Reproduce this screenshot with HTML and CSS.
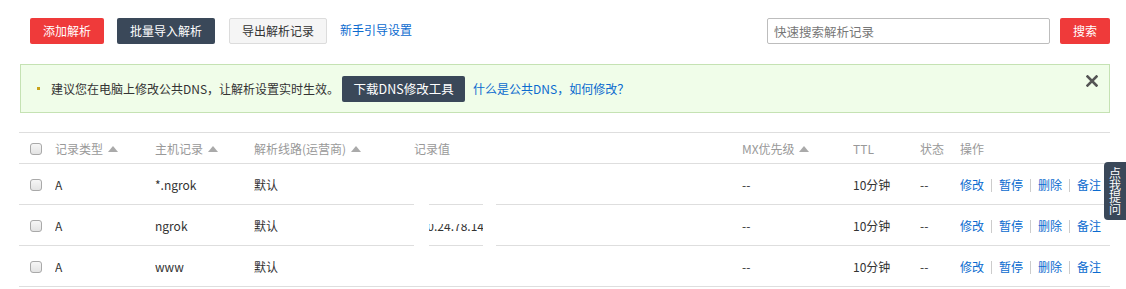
FILE: index.html
```html
<!DOCTYPE html>
<html lang="zh-CN">
<head>
    <meta charset="UTF-8">
    <title>解析记录</title>
    <link rel="stylesheet" href="styles.css">
</head>
<body>
    <div class="page">
        <div class="toolbar">
            <div class="toolbar-left">
                <button class="btn btn-red">添加解析</button>
                <button class="btn btn-dark">批量导入解析</button>
                <button class="btn btn-light">导出解析记录</button>
                <a class="link" href="#">新手引导设置</a>
            </div>
            <div class="toolbar-right">
                <input class="search-input" type="text" placeholder="快速搜索解析记录">
                <button class="btn btn-red btn-search">搜索</button>
            </div>
        </div>

        <div class="alert">
            <span class="bullet"></span>
            <span class="alert-text">建议您在电脑上修改公共DNS，让解析设置实时生效。</span>
            <button class="btn btn-dark btn-tool">下载DNS修改工具</button>
            <a class="link" href="#">什么是公共DNS，如何修改？</a>
            <span class="alert-close">
                <svg width="12" height="12" viewBox="0 0 12 12"><path d="M1.5 1.5 L10.5 10.5 M10.5 1.5 L1.5 10.5" stroke="#555" stroke-width="2.6" stroke-linecap="square"/></svg>
            </span>
        </div>

        <table class="records">
            <colgroup>
                <col style="width:36px">
                <col style="width:100px">
                <col style="width:99px">
                <col style="width:160px">
                <col style="width:328px">
                <col style="width:111px">
                <col style="width:67px">
                <col style="width:40px">
                <col>
            </colgroup>
            <thead>
                <tr>
                    <th class="check-cell"><span class="checkbox"></span></th>
                    <th>记录类型 <span class="sort"></span></th>
                    <th>主机记录 <span class="sort"></span></th>
                    <th>解析线路(运营商) <span class="sort"></span></th>
                    <th>记录值</th>
                    <th>MX优先级 <span class="sort"></span></th>
                    <th>TTL</th>
                    <th>状态</th>
                    <th>操作</th>
                </tr>
            </thead>
            <tbody>
                <tr>
                    <td class="check-cell"><span class="checkbox"></span></td>
                    <td>A</td>
                    <td>*.ngrok</td>
                    <td>默认</td>
                    <td></td>
                    <td>--</td>
                    <td>10分钟</td>
                    <td>--</td>
                    <td class="ops"><a href="#">修改</a><i></i><a href="#">暂停</a><i></i><a href="#">删除</a><i></i><a href="#">备注</a></td>
                </tr>
                <tr>
                    <td class="check-cell"><span class="checkbox"></span></td>
                    <td>A</td>
                    <td>ngrok</td>
                    <td>默认</td>
                    <td class="value-cell">120.24.78.145<span class="mask mask-a"></span><span class="mask mask-b"></span><span class="mask mask-top"></span></td>
                    <td>--</td>
                    <td>10分钟</td>
                    <td>--</td>
                    <td class="ops"><a href="#">修改</a><i></i><a href="#">暂停</a><i></i><a href="#">删除</a><i></i><a href="#">备注</a></td>
                </tr>
                <tr>
                    <td class="check-cell"><span class="checkbox"></span></td>
                    <td>A</td>
                    <td>www</td>
                    <td>默认</td>
                    <td></td>
                    <td>--</td>
                    <td>10分钟</td>
                    <td>--</td>
                    <td class="ops"><a href="#">修改</a><i></i><a href="#">暂停</a><i></i><a href="#">删除</a><i></i><a href="#">备注</a></td>
                </tr>
            </tbody>
        </table>
    </div>

    <div class="side-tab">点我提问</div>
</body>
</html>
```

FILE: styles.css
```css
:root {
    --red: #ef3a3a;
    --dark: #3a4859;
    --blue: #0b6bcf;
    --line: #dedede;
    --text: #333;
}

* {
    box-sizing: border-box;
    margin: 0;
    padding: 0;
}

body {
    font-family: "Noto Sans CJK SC", "Liberation Sans", sans-serif;
    font-size: 12px;
    color: var(--text);
    background: #fff;
    overflow: hidden;
}

.page {
    padding: 18px 16px 0 20px;
}

.toolbar {
    display: flex;
    justify-content: space-between;
    align-items: center;
    padding-left: 10px;
}

.toolbar-left,
.toolbar-right {
    display: flex;
    align-items: center;
}

.btn {
    height: 26px;
    border: none;
    border-radius: 2px;
    font-family: inherit;
    font-size: 12px;
    padding: 0;
    white-space: nowrap;
    cursor: pointer;
    line-height: 24px;
}

.btn-red {
    background: var(--red);
    color: #fff;
    width: 74px;
}

.btn-dark {
    background: var(--dark);
    color: #fff;
}

.toolbar-left .btn-dark {
    width: 98px;
    margin-left: 13px;
}

.btn-light {
    background: #f5f5f5;
    border: 1px solid #dcdcdc;
    color: #333;
    width: 98px;
    margin-left: 14px;
}

.link {
    color: var(--blue);
    text-decoration: none;
    font-size: 12px;
}

.toolbar-left .link {
    margin-left: 13px;
    margin-top: -4px;
}

.search-input {
    width: 283px;
    height: 26px;
    border: 1px solid #bdbdbd;
    border-radius: 2px;
    padding: 0 6px;
    font-family: inherit;
    font-size: 12.5px;
    outline: none;
}

.search-input::placeholder {
    color: #777;
}

.btn-search {
    width: 50px;
    margin-left: 10px;
}

.alert {
    margin-top: 20px;
    height: 49px;
    background: #f0fde9;
    border: 1px solid #c5e2b3;
    display: flex;
    align-items: center;
    padding-left: 16px;
    position: relative;
}

.bullet {
    width: 3px;
    height: 3px;
    background: #c9a21a;
    margin-right: 11px;
}

.alert-text {
    color: #333;
    font-size: 12px;
}

.btn-tool {
    margin-left: 3px;
    height: 26px;
    width: 123px;
    font-size: 12.5px;
}

.alert .link {
    margin-left: 8px;
}

.alert-close {
    position: absolute;
    right: 11px;
    top: 10px;
    display: flex;
}

.records {
    margin-top: 19px;
    margin-left: -1px;
    width: 1091px;
    border-collapse: collapse;
    table-layout: fixed;
}

.records th,
.records td {
    text-align: left;
    border-top: 1px solid var(--line);
    border-bottom: 1px solid var(--line);
    white-space: nowrap;
    overflow: hidden;
}

.records th {
    height: 31px;
    font-weight: normal;
    color: #999;
    font-size: 12px;
}

.records td {
    height: 41px;
    font-size: 12px;
    color: #333;
}

.check-cell {
    padding-left: 11px;
}

.checkbox {
    display: inline-block;
    width: 12px;
    height: 12px;
    border: 1px solid #a9a9a9;
    border-radius: 3px;
    background: linear-gradient(#f6f6f6, #e3e3e3);
    vertical-align: -1px;
    margin-top: -6px;
}

.sort {
    display: inline-block;
    width: 0;
    height: 0;
    border-left: 5px solid transparent;
    border-right: 5px solid transparent;
    border-bottom: 6px solid #aaa;
    margin-left: 2px;
    vertical-align: 2px;
}

.value-cell {
    position: relative;
    overflow: visible !important;
}

.mask {
    position: absolute;
    background: #fff;
}

.mask-a {
    left: 0;
    width: 15px;
    top: -4px;
    bottom: -4px;
}

.mask-b {
    left: 69px;
    width: 13px;
    top: -4px;
    bottom: -4px;
}

.mask-top {
    left: 0;
    width: 82px;
    top: 2px;
    height: 17px;
}

.ops a {
    color: var(--blue);
    text-decoration: none;
}

.ops i {
    display: inline-block;
    width: 1px;
    height: 13px;
    background: #ccc;
    margin: 0 7px;
    vertical-align: -2px;
}

.side-tab {
    position: fixed;
    right: 0;
    top: 162px;
    width: 22px;
    height: 58px;
    background: var(--dark);
    color: #fff;
    border-radius: 4px 0 0 4px;
    font-size: 12px;
    line-height: 13px;
    writing-mode: vertical-rl;
    display: flex;
    align-items: center;
    justify-content: center;
}
```
